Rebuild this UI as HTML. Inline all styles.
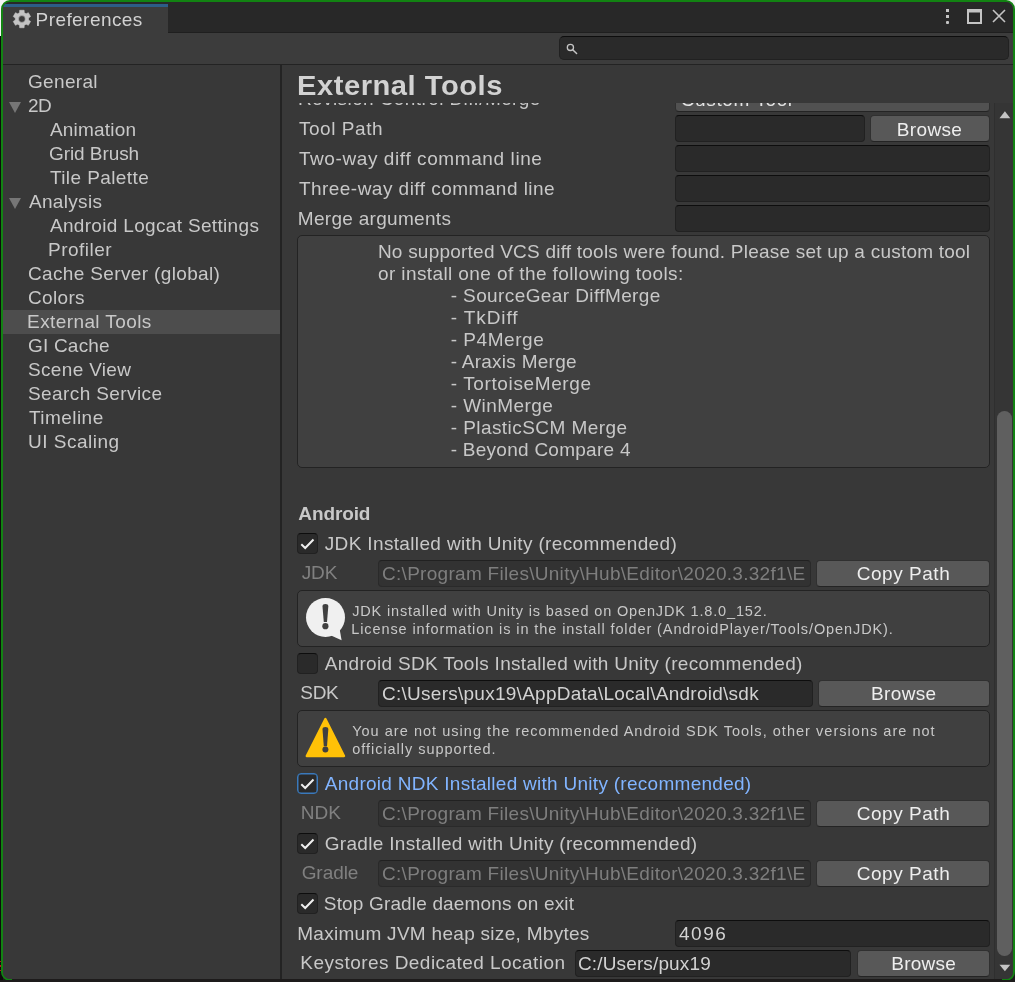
<!DOCTYPE html>
<html>
<head>
<meta charset="utf-8">
<title>Preferences</title>
<style>
html,body{margin:0;padding:0;}
body{width:1015px;height:982px;overflow:hidden;background:#1c1c1c;position:relative;
  font-family:"Liberation Sans",sans-serif;font-size:19px;color:#c8c8c8;}
.abs{position:absolute;}
#bgwhite{left:0;top:0;width:1015px;height:36px;background:#f4f4f4;}
#bgblack{left:0;top:36px;width:3px;height:946px;background:#0c0c0c;}
#win{left:1px;top:0;width:1010px;height:977px;border:2px solid #128312;border-radius:9px;background:#383838;overflow:hidden;}
#bgbottom{left:0;top:980px;width:1015px;height:2px;background:#1d1b1b;}
#bgbottom2{left:12px;top:979px;width:990px;height:3px;background:#1d1b1b;}
#inner{left:-3px;top:-2px;width:1015px;height:982px;will-change:transform;}
#tabbar{left:3px;top:2px;width:1010px;height:30px;background:#282828;border-bottom:1px solid #1f1f1f;}
#tab{left:3px;top:4px;width:165px;height:29px;background:#3c3c3c;}
#tabblue{left:3px;top:4px;width:165px;height:3px;background:#2c5d87;}
#toolbar{left:3px;top:33px;width:1010px;height:31px;background:#3c3c3c;border-bottom:1px solid #232323;}
#search{left:559px;top:36px;width:448px;height:22px;background:#2a2a2a;border:1px solid #212121;border-top-color:#0d0d0d;border-radius:5px;}
#side{left:3px;top:65px;width:277px;height:915px;background:#383838;}
#split{left:280px;top:65px;width:2px;height:915px;background:#232323;}
#selrow{left:3px;top:310px;width:277px;height:24px;background:#4d4d4d;}
.tri{width:0;height:0;border-left:6.5px solid transparent;border-right:6.5px solid transparent;border-top:11.5px solid #767676;}
h1{position:absolute;margin:0;left:296.6px;top:68px;font-size:27.5px;line-height:36px;letter-spacing:0.49px;font-weight:bold;color:#d2d2d2;white-space:nowrap;transform-origin:0 0;transform:scaleX(1.06);}
#scroll{left:282px;top:102.5px;width:712px;height:877.5px;overflow:hidden;}
#sc{left:-282px;top:-102.5px;width:1015px;height:982px;}
.t{position:absolute;white-space:nowrap;color:#c8c8c8;line-height:normal;}
.t.n{font-size:19px;}
.t.s{font-size:14.5px;}
.t.b{font-size:19px;font-weight:bold;}
.inp{box-sizing:border-box;height:27px;background:#2a2a2a;border:1px solid #212121;border-top-color:#0d0d0d;border-radius:4px;}
.inp.dis{background:#323232;border-color:#2a2a2a;border-top-color:#212121;}
.btn{box-sizing:border-box;height:27px;background:#585858;border:1px solid #303030;border-bottom-color:#242424;border-radius:4px;}
.help{box-sizing:border-box;background:#404040;border:1px solid #232323;border-radius:5px;}
.cb{box-sizing:border-box;width:21px;height:21px;background:#2a2a2a;border:1px solid #212121;border-top-color:#0d0d0d;border-radius:4px;}
#sbar{left:994px;top:102.5px;width:19px;height:877.5px;background:#353535;border-left:1px solid #2f2f2f;box-sizing:border-box;}
#thumb{left:997px;top:411px;width:15px;height:545px;background:#5f5f5f;border-radius:7.5px;}
</style>
</head>
<body>
<div class="abs" id="bgwhite"></div>
<div class="abs" id="bgblack"></div>
<div class="abs" id="win"><div class="abs" id="inner">

<div class="abs" id="tabbar"></div>
<div class="abs" id="tab"></div>
<div class="abs" id="tabblue"></div>
<div class="abs" id="toolbar"></div>
<div class="abs" id="search"></div>


<svg class="abs" style="left:0;top:0" width="1015" height="70" viewBox="0 0 1015 70">
 <path d="M19.54,12.73 L19.67,10.28 L24.13,10.28 L24.26,12.73 L26.15,13.82 L28.34,12.71 L30.57,16.57 L28.51,17.91 L28.51,20.09 L30.57,21.43 L28.34,25.29 L26.15,24.18 L24.26,25.27 L24.13,27.72 L19.67,27.72 L19.54,25.27 L17.65,24.18 L15.46,25.29 L13.23,21.43 L15.29,20.09 L15.29,17.91 L13.23,16.57 L15.46,12.71 L17.65,13.82Z M25.3,19 a3.4,3.4 0 1,0 -6.8,0 a3.4,3.4 0 1,0 6.8,0Z" fill="#c4c4c4" fill-rule="evenodd" stroke="#c4c4c4" stroke-width="0.6" stroke-linejoin="round"/>
 <!-- search magnifier -->
 <circle cx="570.4" cy="47.4" r="3.1" fill="none" stroke="#c4c4c4" stroke-width="1.3"/>
 <path d="M572.7,49.7 L576.6,53.5" stroke="#c4c4c4" stroke-width="1.5" stroke-linecap="round"/>
 <!-- kebab -->
 <rect x="946" y="9" width="3" height="3" fill="#c4c4c4"/><rect x="946" y="15" width="3" height="3" fill="#c4c4c4"/><rect x="946" y="21" width="3" height="3" rx="1" fill="#c4c4c4"/>
 <!-- maximize -->
 <path d="M967,9 h15 v15 h-15Z M969,12.6 v9.4 h11 v-9.4Z" fill="#c4c4c4" fill-rule="evenodd"/>
 <!-- close -->
 <path d="M993,10 L1005,22 M1005,10 L993,22" stroke="#c4c4c4" stroke-width="1.6"/>
</svg>
<div class="abs" id="side"></div>
<div class="abs" id="selrow"></div>
<div class="t n" id="t0" style="left:28.00px;top:71px;letter-spacing:0.330px;">General</div>
<div class="t n" id="t1" style="left:28.00px;top:95px;letter-spacing:-0.570px;">2D</div>
<div class="t n" id="t2" style="left:49.90px;top:119px;letter-spacing:0.218px;">Animation</div>
<div class="t n" id="t3" style="left:49.00px;top:143px;letter-spacing:-0.070px;">Grid Brush</div>
<div class="t n" id="t4" style="left:49.90px;top:167px;letter-spacing:0.412px;">Tile Palette</div>
<div class="t n" id="t5" style="left:28.90px;top:191px;letter-spacing:0.330px;">Analysis</div>
<div class="t n" id="t6" style="left:49.90px;top:215px;letter-spacing:0.330px;">Android Logcat Settings</div>
<div class="t n" id="t7" style="left:48.10px;top:239px;letter-spacing:0.459px;">Profiler</div>
<div class="t n" id="t8" style="left:28.00px;top:263px;letter-spacing:0.357px;">Cache Server (global)</div>
<div class="t n" id="t9" style="left:28.00px;top:287px;letter-spacing:0.330px;">Colors</div>
<div class="t n" id="t10" style="left:27.10px;top:311px;letter-spacing:0.399px;">External Tools</div>
<div class="t n" id="t11" style="left:28.00px;top:335px;letter-spacing:0.201px;">GI Cache</div>
<div class="t n" id="t12" style="left:28.00px;top:359px;letter-spacing:0.330px;">Scene View</div>
<div class="t n" id="t13" style="left:28.00px;top:383px;letter-spacing:0.399px;">Search Service</div>
<div class="t n" id="t14" style="left:28.90px;top:407px;letter-spacing:0.459px;">Timeline</div>
<div class="t n" id="t15" style="left:28.00px;top:431px;letter-spacing:0.510px;">UI Scaling</div>
<div class="t n" id="t16" style="left:35.52px;top:8.600000000000001px;letter-spacing:0.438px;color:#d2d2d2">Preferences</div>
<div class="abs tri" style="left:9px;top:102px"></div>
<div class="abs tri" style="left:9px;top:198px"></div>
<div class="abs" id="split"></div>

<h1>External Tools</h1>

<div class="abs" id="scroll"><div class="abs" id="sc">
<div class="abs btn" style="left:675px;top:85px;width:315px;background:#515151"></div>
<div class="abs inp" style="left:675px;top:115px;width:190px"></div>
<div class="abs btn" style="left:870px;top:115px;width:120px"></div>
<div class="abs inp" style="left:675px;top:145px;width:315px"></div>
<div class="abs inp" style="left:675px;top:175px;width:315px"></div>
<div class="abs inp" style="left:675px;top:205px;width:315px"></div>
<div class="abs help" style="left:297px;top:235px;width:693px;height:233px"></div>

<div class="abs cb" style="left:297px;top:533px"></div>
<div class="abs inp dis" style="left:378px;top:560px;width:433px"></div>
<div class="abs btn" style="left:816px;top:560px;width:174px"></div>
<div class="abs help" style="left:297px;top:590px;width:693px;height:57px"></div>

<div class="abs cb" style="left:297px;top:653px"></div>
<div class="abs inp" style="left:378px;top:680px;width:435px"></div>
<div class="abs btn" style="left:818px;top:680px;width:172px"></div>
<div class="abs help" style="left:297px;top:710px;width:693px;height:57px"></div>

<div class="abs cb" style="left:297px;top:773px;border-color:#3a79bb;box-shadow:inset 0 0 0 0.5px #3a79bb"></div>
<div class="abs inp dis" style="left:378px;top:800px;width:433px"></div>
<div class="abs btn" style="left:816px;top:800px;width:174px"></div>

<div class="abs cb" style="left:297px;top:833px"></div>
<div class="abs inp dis" style="left:378px;top:860px;width:433px"></div>
<div class="abs btn" style="left:816px;top:860px;width:174px"></div>

<div class="abs cb" style="left:297px;top:893px"></div>
<div class="abs inp" style="left:675px;top:920px;width:315px"></div>
<div class="abs inp" style="left:575px;top:950px;width:276px"></div>
<div class="abs btn" style="left:857px;top:950px;width:133px"></div>
<svg class="abs" style="left:297px;top:533px" width="21" height="21" viewBox="0 0 21 21"><path d="M4.3,11.2 L8.2,15 L16.5,6.5" fill="none" stroke="#eeeeee" stroke-width="2"/></svg>
<svg class="abs" style="left:297px;top:773px" width="21" height="21" viewBox="0 0 21 21"><path d="M4.3,11.2 L8.2,15 L16.5,6.5" fill="none" stroke="#eeeeee" stroke-width="2"/></svg>
<svg class="abs" style="left:297px;top:833px" width="21" height="21" viewBox="0 0 21 21"><path d="M4.3,11.2 L8.2,15 L16.5,6.5" fill="none" stroke="#eeeeee" stroke-width="2"/></svg>
<svg class="abs" style="left:297px;top:893px" width="21" height="21" viewBox="0 0 21 21"><path d="M4.3,11.2 L8.2,15 L16.5,6.5" fill="none" stroke="#eeeeee" stroke-width="2"/></svg>
<svg class="abs" style="left:300px;top:592px" width="50" height="52" viewBox="300 592 50 52">
 <circle cx="325.5" cy="617.4" r="19.5" fill="#f0f0f0"/>
 <path d="M331,635.5 L341.6,640.2 L339.6,629 Z" fill="#f0f0f0"/>
 <path d="M322.5,606.5 a2.9,2.4 0 0,1 5.8,0 L327,621.9 L323.8,621.9Z" fill="#404040"/>
 <circle cx="325.4" cy="626.2" r="3.1" fill="#404040"/>
</svg>
<svg class="abs" style="left:300px;top:712px" width="50" height="52" viewBox="300 712 50 52">
 <path d="M325.4,719 L344,756 L306.8,756Z" fill="#ffc107" stroke="#ffc107" stroke-width="2.4" stroke-linejoin="round"/>
 <path d="M322.5,729.5 a2.9,2.4 0 0,1 5.8,0 L327,746.2 L323.8,746.2Z" fill="#404040"/>
 <circle cx="325.4" cy="749.6" r="3" fill="#404040"/>
</svg>
<div class="t n" id="t17" style="left:298.00px;top:88px;letter-spacing:0.400px;">Revision Control Diff/Merge</div>
<div class="t n" id="t18" style="left:680.80px;top:89px;letter-spacing:0.600px;color:#e4e4e4">Custom Tool</div>
<div class="t n" id="t19" style="left:298.90px;top:118px;letter-spacing:0.555px;">Tool Path</div>
<div class="t n" id="t20" style="left:896.84px;top:119px;letter-spacing:0.330px;color:#eee">Browse</div>
<div class="t n" id="t21" style="left:298.90px;top:148px;letter-spacing:0.593px;">Two-way diff command line</div>
<div class="t n" id="t22" style="left:298.90px;top:178px;letter-spacing:0.468px;">Three-way diff command line</div>
<div class="t n" id="t23" style="left:297.76px;top:208px;letter-spacing:0.304px;">Merge arguments</div>
<div class="t n" id="t24" style="left:377.92px;top:241px;letter-spacing:0.224px;">No supported VCS diff tools were found. Please set up a custom tool</div>
<div class="t n" id="t25" style="left:377.92px;top:263px;letter-spacing:0.403px;">or install one of the following tools:</div>
<div class="t n" id="t26" style="left:450.66px;top:285px;letter-spacing:0.399px;">- SourceGear DiffMerge</div>
<div class="t n" id="t27" style="left:450.66px;top:307px;letter-spacing:0.921px;">- TkDiff</div>
<div class="t n" id="t28" style="left:450.66px;top:329px;letter-spacing:0.555px;">- P4Merge</div>
<div class="t n" id="t29" style="left:450.66px;top:351px;letter-spacing:0.261px;">- Araxis Merge</div>
<div class="t n" id="t30" style="left:450.66px;top:373px;letter-spacing:0.626px;">- TortoiseMerge</div>
<div class="t n" id="t31" style="left:450.66px;top:395px;letter-spacing:0.450px;">- WinMerge</div>
<div class="t n" id="t32" style="left:450.66px;top:417px;letter-spacing:0.436px;">- PlasticSCM Merge</div>
<div class="t n" id="t33" style="left:450.66px;top:439px;letter-spacing:0.266px;">- Beyond Compare 4</div>
<div class="t b" id="t34" style="left:298.32px;top:503px;letter-spacing:-0.120px;">Android</div>
<div class="t n" id="t35" style="left:324.74px;top:533px;letter-spacing:0.354px;">JDK Installed with Unity (recommended)</div>
<div class="t n" id="t36" style="left:301.66px;top:562px;letter-spacing:-0.120px;color:#808080">JDK</div>
<div class="t n" id="t37" style="left:382.00px;top:563px;letter-spacing:0.291px;color:#7e7e7e">C:\Program Files\Unity\Hub\Editor\2020.3.32f1\E</div>
<div class="t n" id="t38" style="left:856.72px;top:563px;letter-spacing:0.533px;color:#eee">Copy Path</div>
<div class="t s" id="t39" style="left:352.16px;top:603px;letter-spacing:0.840px;">JDK installed with Unity is based on OpenJDK 1.8.0_152.</div>
<div class="t s" id="t40" style="left:351.26px;top:621px;letter-spacing:0.904px;">License information is in the install folder (AndroidPlayer/Tools/OpenJDK).</div>
<div class="t n" id="t41" style="left:324.74px;top:653px;letter-spacing:0.302px;">Android SDK Tools Installed with Unity (recommended)</div>
<div class="t n" id="t42" style="left:300.34px;top:682px;letter-spacing:-0.300px;">SDK</div>
<div class="t n" id="t43" style="left:382.00px;top:683px;letter-spacing:0.261px;color:#d2d2d2">C:\Users\pux19\AppData\Local\Android\sdk</div>
<div class="t n" id="t44" style="left:871.10px;top:683px;letter-spacing:0.330px;color:#eee">Browse</div>
<div class="t s" id="t45" style="left:352.16px;top:723px;letter-spacing:1.031px;">You are not using the recommended Android SDK Tools, other versions are not</div>
<div class="t s" id="t46" style="left:352.16px;top:741px;letter-spacing:0.978px;">officially supported.</div>
<div class="t n" id="t47" style="left:324.74px;top:773px;letter-spacing:0.278px;color:#81b4ff">Android NDK Installed with Unity (recommended)</div>
<div class="t n" id="t48" style="left:300.76px;top:802px;letter-spacing:-0.030px;color:#808080">NDK</div>
<div class="t n" id="t49" style="left:382.00px;top:803px;letter-spacing:0.291px;color:#7e7e7e">C:\Program Files\Unity\Hub\Editor\2020.3.32f1\E</div>
<div class="t n" id="t50" style="left:856.72px;top:803px;letter-spacing:0.533px;color:#eee">Copy Path</div>
<div class="t n" id="t51" style="left:324.74px;top:833px;letter-spacing:0.308px;">Gradle Installed with Unity (recommended)</div>
<div class="t n" id="t52" style="left:301.66px;top:862px;letter-spacing:-0.066px;color:#808080">Gradle</div>
<div class="t n" id="t53" style="left:382.00px;top:863px;letter-spacing:0.291px;color:#7e7e7e">C:\Program Files\Unity\Hub\Editor\2020.3.32f1\E</div>
<div class="t n" id="t54" style="left:856.72px;top:863px;letter-spacing:0.533px;color:#eee">Copy Path</div>
<div class="t n" id="t55" style="left:323.84px;top:893px;letter-spacing:0.157px;">Stop Gradle daemons on exit</div>
<div class="t n" id="t56" style="left:297.18px;top:923px;letter-spacing:0.291px;">Maximum JVM heap size, Mbytes</div>
<div class="t n" id="t57" style="left:679.08px;top:923px;letter-spacing:1.470px;color:#d2d2d2">4096</div>
<div class="t n" id="t58" style="left:300.34px;top:952px;letter-spacing:0.457px;">Keystores Dedicated Location</div>
<div class="t n" id="t59" style="left:578.00px;top:953px;letter-spacing:0.136px;color:#d2d2d2">C:/Users/pux19</div>
<div class="t n" id="t60" style="left:891.26px;top:953px;letter-spacing:0.258px;color:#eee">Browse</div>
</div></div>

<div class="abs" id="sbar"></div>
<div class="abs" id="thumb"></div>
<svg class="abs" style="left:994px;top:100px" width="19" height="882" viewBox="994 100 19 882">
 <path d="M1004.9,111.2 L1010.3,118.2 L999.5,118.2Z" fill="#c4c4c4"/>
 <path d="M1004.9,971.2 L1010.3,964.8 L999.5,964.8Z" fill="#c4c4c4"/>
</svg>

</div></div>
<div class="abs" id="bgbottom"></div>
<div class="abs" style="left:0;top:961px;width:1px;height:1px;background:#c01020"></div>
<div class="abs" style="left:0;top:965px;width:1px;height:2px;background:#c01020"></div>
<div class="abs" style="left:0;top:970px;width:1px;height:1px;background:#c01020"></div>
<div class="abs" id="bgbottom2"></div>
</body>
</html>
